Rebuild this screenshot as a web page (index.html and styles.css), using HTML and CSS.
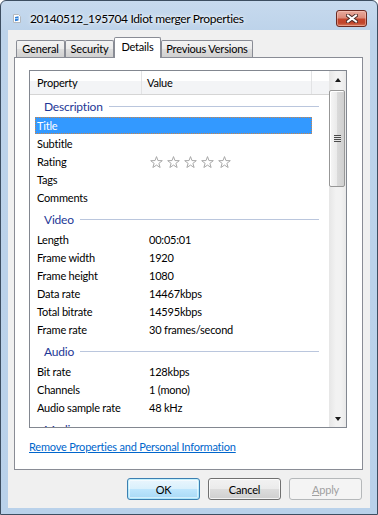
FILE: index.html
```html
<!DOCTYPE html>
<html>
<head>
<meta charset="utf-8">
<link rel="stylesheet" href="styles.css">
</head>
<body>
<svg class="defs" width="0" height="0">
  <symbol id="star" viewBox="0 0 13 12">
    <path d="M6.5 0.6 L7.97 4.58 L12.3 4.68 L8.88 7.37 L10.14 11.5 L6.5 9.1 L2.86 11.5 L4.12 7.37 L0.7 4.68 L5.03 4.58 Z" fill="#fff" stroke="#a8a8a8" stroke-width="1" stroke-linejoin="round"/>
  </symbol>
</svg>
<div class="window">
  <div class="titlebar">
    <svg class="app-icon" width="8" height="9" viewBox="0 0 8 9">
      <path d="M0.5 0.5 H5.5 L7.5 2.5 V8.5 H0.5 Z" fill="#fff" stroke="#b4b8bd"/>
      <path d="M2 3 L5.5 2.2 V6.6 L2 7.2 Z" fill="#2f7fd8"/>
      <rect x="2" y="4" width="3.5" height="1" fill="#9cc8f2"/>
    </svg>
    <div class="title">20140512_195704 Idiot merger Properties</div>
    <div class="close">
      <svg width="12" height="9" viewBox="0 0 12 9">
        <path d="M2 1.5 L10 7.5 M10 1.5 L2 7.5" stroke="#4a2a26" stroke-width="4" stroke-linecap="square"/>
        <path d="M2 1.5 L10 7.5 M10 1.5 L2 7.5" stroke="#fff" stroke-width="2" stroke-linecap="square"/>
      </svg>
    </div>
  </div>
  <div class="client">
    <div class="tabs">
      <div class="tab t-general">General</div>
      <div class="tab t-security">Security</div>
      <div class="tab t-details active">Details</div>
      <div class="tab t-prev">Previous Versions</div>
    </div>
    <div class="panel">
      <div class="listview">
        <div class="lv-main">
          <div class="lv-header">
            <div class="col col-prop">Property</div>
            <div class="col col-val">Value</div>
            <div class="col col-fill"></div>
          </div>
          <div class="lv-body">
            <div class="group first"><span>Description</span><i></i></div>
            <div class="row selected"><span class="k">Title</span><span class="v"></span></div>
            <div class="row"><span class="k">Subtitle</span><span class="v"></span></div>
            <div class="row"><span class="k">Rating</span><span class="v stars">
              <svg class="star"><use href="#star"/></svg><svg class="star"><use href="#star"/></svg><svg class="star"><use href="#star"/></svg><svg class="star"><use href="#star"/></svg><svg class="star"><use href="#star"/></svg>
            </span></div>
            <div class="row"><span class="k">Tags</span><span class="v"></span></div>
            <div class="row"><span class="k">Comments</span><span class="v"></span></div>
            <div class="group"><span>Video</span><i></i></div>
            <div class="row"><span class="k">Length</span><span class="v">00:05:01</span></div>
            <div class="row"><span class="k">Frame width</span><span class="v">1920</span></div>
            <div class="row"><span class="k">Frame height</span><span class="v">1080</span></div>
            <div class="row"><span class="k">Data rate</span><span class="v">14467kbps</span></div>
            <div class="row"><span class="k">Total bitrate</span><span class="v">14595kbps</span></div>
            <div class="row"><span class="k">Frame rate</span><span class="v">30 frames/second</span></div>
            <div class="group"><span>Audio</span><i></i></div>
            <div class="row"><span class="k">Bit rate</span><span class="v">128kbps</span></div>
            <div class="row"><span class="k">Channels</span><span class="v">1 (mono)</span></div>
            <div class="row"><span class="k">Audio sample rate</span><span class="v">48 kHz</span></div>
            <div class="group"><span>Media</span><i></i></div>
          </div>
        </div>
        <div class="scrollbar">
          <div class="sb-btn"><span class="arrow up"></span></div>
          <div class="sb-track"><div class="sb-thumb"><span class="grip"></span></div></div>
          <div class="sb-btn"><span class="arrow down"></span></div>
        </div>
      </div>
      <a class="link" href="#">Remove Properties and Personal Information</a>
    </div>
    <div class="buttons">
      <div class="btn default">OK</div>
      <div class="btn">Cancel</div>
      <div class="btn disabled"><u>A</u>pply</div>
    </div>
  </div>
</div>
</body>
</html>
```
FILE: styles.css
```css
* { box-sizing: border-box; }
html, body { margin: 0; padding: 0; background: #fff; }
body {
  font-family: Lato, "Liberation Sans", sans-serif;
  font-size: 11px;
  letter-spacing: -0.2px;
  color: #000;
}
.defs { position: absolute; width: 0; height: 0; }

.window {
  width: 378px;
  height: 515px;
  border: 1px solid #3d4e61;
  border-radius: 6px 6px 0 0;
  background: linear-gradient(#c7daee, #bdd3ea 30px, #b9d1ea);
  padding: 0 7px 6px 7px;
  display: flex;
  flex-direction: column;
}

.titlebar {
  height: 29px;
  flex: none;
  display: flex;
  align-items: center;
  padding: 6px 3px 0 5px;
}
.app-icon { flex: none; margin-right: 9px; }
.title {
  flex: 1;
  font-size: 12px;
  letter-spacing: -0.35px;
  color: #000;
  text-shadow: 0 0 6px #fff, 0 0 3px #fff;
  white-space: nowrap;
}
.close {
  flex: none;
  width: 31px;
  height: 17px;
  border: 1px solid #6b2a22;
  border-radius: 3px;
  background: linear-gradient(#e8ab9e, #dc8b7a 45%, #c4462d 55%, #c0452b 80%, #d77b5e);
  box-shadow: inset 0 0 0 1px rgba(255,210,200,0.45);
  display: flex;
  align-items: center;
  justify-content: center;
}

.client {
  flex: 1;
  background: #f0f0f0;
  padding: 7px 0 0 0;
  display: flex;
  flex-direction: column;
}

.tabs {
  height: 20px;
  flex: none;
  display: flex;
  align-items: flex-end;
  padding-left: 8px;
}
.tab {
  height: 17px;
  border: 1px solid #898c95;
  border-bottom: none;
  border-radius: 2px 2px 0 0;
  background: linear-gradient(#f3f3f3, #ebebeb 50%, #dedede 50%, #d0d0d0);
  text-align: center;
  line-height: 16px;
  white-space: nowrap;
}
.t-general { width: 49px; }
.t-security { width: 49px; }
.t-details { width: 47px; }
.t-prev { width: 92px; }
.tab.active {
  height: 21px;
  margin-bottom: -1px;
  background: #fff;
  position: relative;
  z-index: 1;
  line-height: 18px;
}

.panel {
  height: 413px;
  flex: none;
  margin: 0 7px 0 6px;
  border: 1px solid #898c95;
  background: #fff;
  padding: 12px 15px 0 14px;
}

.listview {
  height: 358px;
  border: 1px solid #828790;
  display: flex;
  overflow: hidden;
}
.lv-main { width: 299px; flex: none; overflow: hidden; }
.lv-header {
  height: 24px;
  display: flex;
  border-bottom: 1px solid #d5d5d5;
  background: linear-gradient(#ffffff, #ffffff 45%, #f3f4f6 45%, #f3f4f6);
}
.col { height: 23px; line-height: 23px; color: #000; }
.col-prop { width: 112px; padding-left: 7px; border-right: 1px solid #e2e3e5; }
.col-val { width: 170px; padding-left: 5px; border-right: 1px solid #e2e3e5; }
.col-fill { flex: 1; }

.lv-body { height: 332px; overflow: hidden; }
.group {
  height: 24px;
  display: flex;
  align-items: center;
  padding: 0 10px 0 14px;
  color: #1e3796;
  font-size: 12px;
}
.group.first { height: 22px; }
.group i {
  flex: 1;
  height: 1px;
  margin-left: 6px;
  background: #bac6dd;
}
.row {
  height: 17px;
  margin: 0 17px 1px 5px;
  display: flex;
  align-items: center;
  border: 1px solid transparent;
  white-space: nowrap;
}
.row .k { width: 113px; padding-left: 1px; flex: none; }
.row .v { flex: 1; }
.row.selected {
  background: #3399ff;
  color: #fff;
  border: 1px dotted #c9854a;
}
.stars { display: flex; gap: 4px; padding-left: 1px; }
.star { width: 13px; height: 12px; flex: none; }

.scrollbar {
  width: 17px;
  flex: none;
  display: flex;
  flex-direction: column;
  background: linear-gradient(to right, #e6e6e6, #f2f2f2 40%, #f2f2f2 70%, #e9e9e9);
}
.sb-btn {
  height: 17px;
  flex: none;
  display: flex;
  align-items: center;
  justify-content: center;
}
.arrow { width: 0; height: 0; border-left: 3.5px solid transparent; border-right: 3.5px solid transparent; }
.arrow.up { border-bottom: 4px solid #1a1a1a; }
.arrow.down { border-top: 4px solid #1a1a1a; }
.sb-track { flex: 1; padding: 2px 1px 0 0; }
.sb-thumb {
  height: 97px;
  border: 1px solid #979797;
  border-radius: 2px;
  background: linear-gradient(to right, #f6f6f6, #eaeaea 50%, #dadada 50%, #d0d0d0);
  box-shadow: inset 1px 1px 0 #fff;
  display: flex;
  align-items: center;
  justify-content: center;
}
.grip {
  width: 7px;
  height: 7px;
  background: repeating-linear-gradient(#4b4b4b 0 1px, #e6e6e6 1px 2px);
}

.link {
  display: inline-block;
  margin-top: 11px;
  line-height: 16px;
  color: #0066cc;
  text-decoration: underline;
}

.buttons {
  flex: none;
  display: flex;
  justify-content: flex-end;
  gap: 8px;
  margin-top: 8px;
  padding-right: 8px;
}
.btn {
  width: 73px;
  height: 22px;
  border: 1px solid #707070;
  border-radius: 3px;
  background: linear-gradient(#f2f2f2, #ebebeb 50%, #dddddd 50%, #cfcfcf);
  box-shadow: inset 0 0 0 1px rgba(255,255,255,0.75);
  display: flex;
  align-items: center;
  justify-content: center;
  color: #000;
}
.btn.default {
  border-color: #3c7fb1;
  background: linear-gradient(#eaf6fd, #d9f0fc 50%, #bee6fd 50%, #a7d9f5);
  box-shadow: inset 0 0 0 1px #48d8fb44, inset 0 0 0 2px rgba(255,255,255,0.5);
}
.btn.disabled {
  border-color: #b5b8ba;
  background: #f4f4f4;
  color: #a0a0a0;
  box-shadow: none;
}
.btn u { text-decoration: underline; }
```
